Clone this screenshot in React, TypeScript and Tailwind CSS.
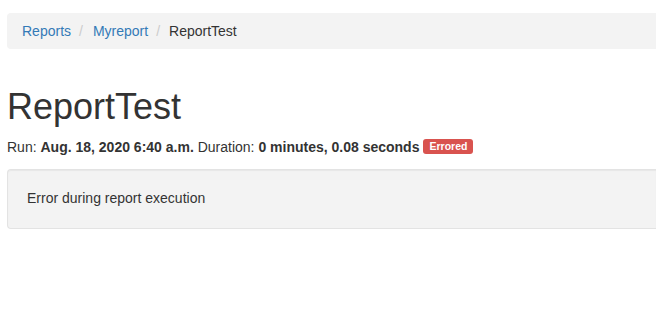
export default function App() {
  return (
    <div className="min-h-[326px] bg-white pl-[7px] text-[14px] leading-[20px] text-[#333]" style={{ fontFamily: '"Liberation Sans", Arial, sans-serif' }}>
      <ol className="mt-[13px] flex items-center rounded-l-[4px] bg-[#f3f3f3] py-[8px] pl-[15px]">
        <li><a className="text-[#337ab7]" href="#">Reports</a></li>
        <li className="pl-[8px] pr-[10px] text-[#ccc]">/</li>
        <li><a className="text-[#337ab7]" href="#">Myreport</a></li>
        <li className="pl-[8px] pr-[9px] text-[#ccc]">/</li>
        <li>ReportTest</li>
      </ol>
      <h1 className="mt-[38px] mb-[10px] text-[36px] leading-[39.6px] font-normal">ReportTest</h1>
      <p className="mb-[12px] flex items-center">
        <span>Run: <b>Aug. 18, 2020 6:40 a.m.</b> Duration: <b>0 minutes, 0.08 seconds</b></span>
        <span className="ml-[4px] rounded-[3px] bg-[#d9534f] px-[6px] pt-[2px] pb-[3px] text-[10.5px] leading-none font-bold text-white">Errored</span>
      </p>
      <div className="rounded-l-[4px] border border-r-0 border-[#e3e3e3] bg-[#f3f3f3] pt-[18px] pb-[20px] pl-[19px] shadow-[inset_0_1px_1px_rgba(0,0,0,0.05)]">
        Error during report execution
      </div>
    </div>
  );
}
